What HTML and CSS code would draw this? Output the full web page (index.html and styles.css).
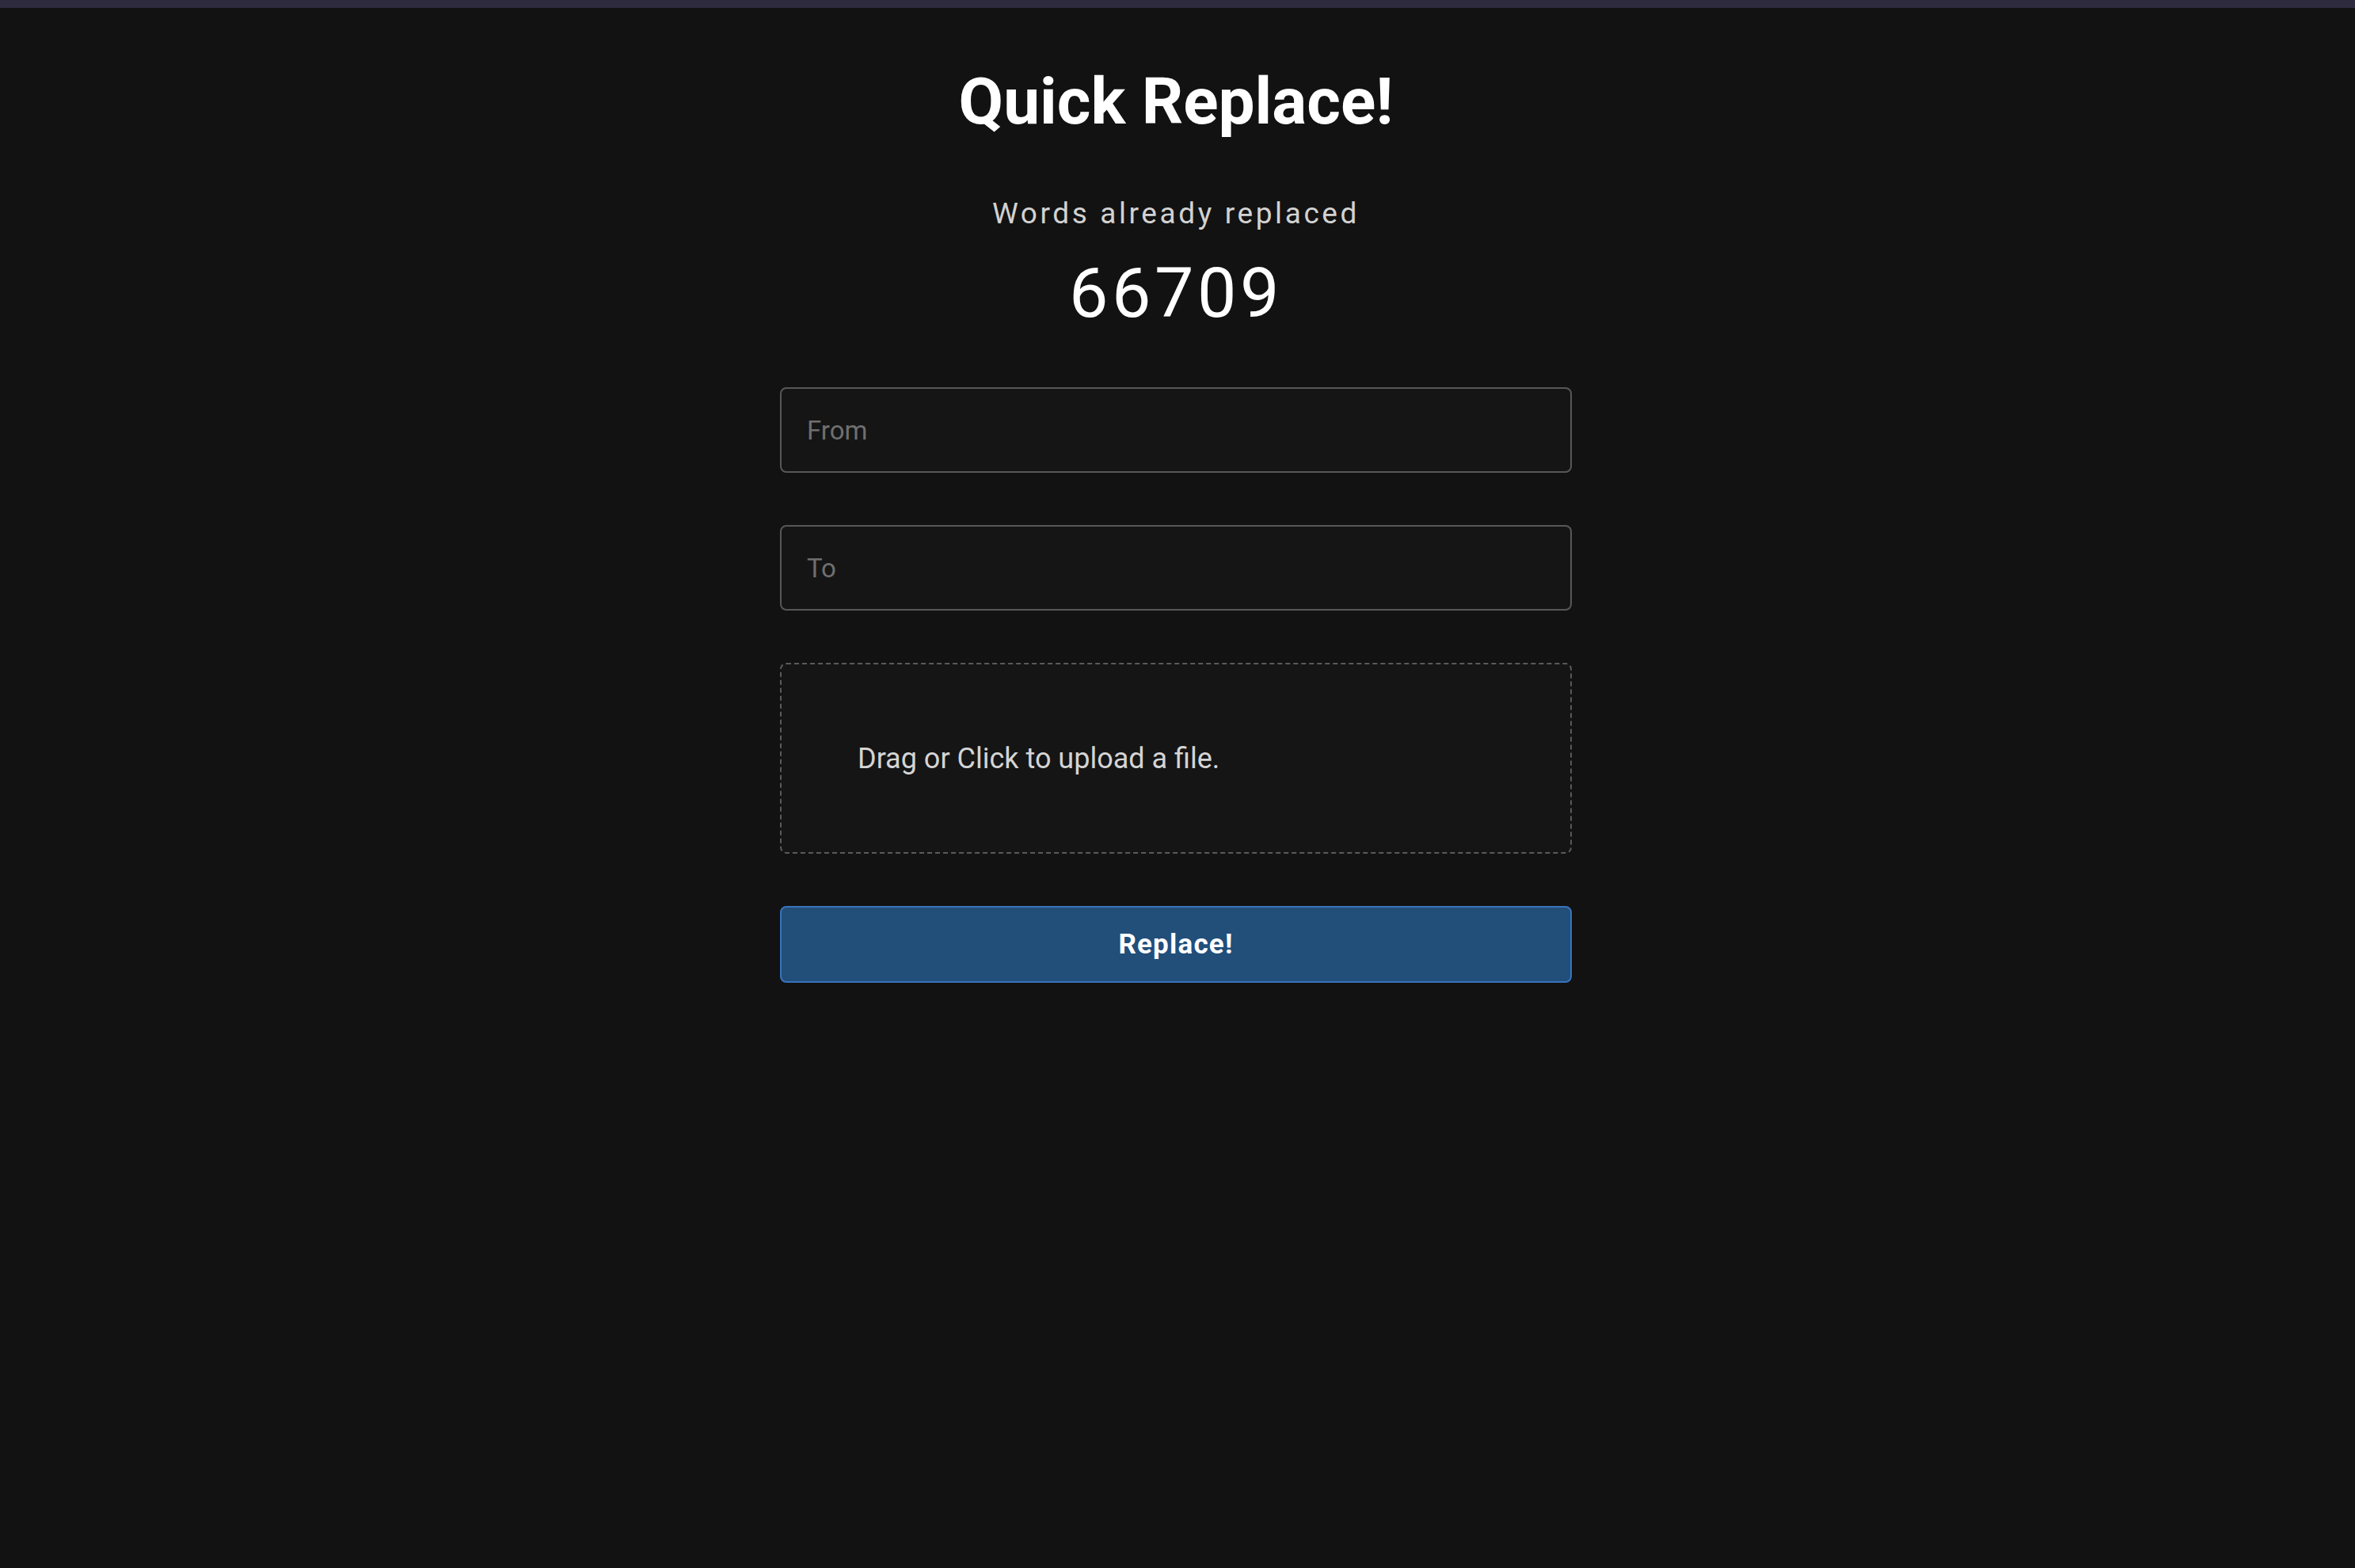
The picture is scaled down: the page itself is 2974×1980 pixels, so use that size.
FILE: index.html
```html
<!DOCTYPE html>
<html lang="en">
<head>
<meta charset="utf-8">
<title>Quick Replace!</title>
<link rel="stylesheet" href="styles.css">
</head>
<body>
<div class="topbar"></div>
<main class="app">
  <h1 class="title">Quick Replace!</h1>
  <p class="counter-label">Words already replaced</p>
  <p class="counter-value">66709</p>
  <form class="form">
    <input class="field" type="text" placeholder="From">
    <input class="field" type="text" placeholder="To">
    <label class="dropzone">
      <span class="dropzone-text">Drag or Click to upload a file.</span>
    </label>
    <button class="submit" type="button">Replace!</button>
  </form>
</main>
</body>
</html>
```
FILE: styles.css
```css
html, body {
  margin: 0;
  padding: 0;
  background: #121212;
  font-family: Roboto, "Noto Sans", sans-serif;
  color: #ffffff;
}

body {
  padding-right: 4px;
}

.topbar {
  height: 10px;
  margin-right: -4px;
  background: #2d2b3d;
}

.app {
  width: 1000px;
  margin: 0 auto;
  display: flex;
  flex-direction: column;
  align-items: center;
}

.title {
  margin: 68px 0 0;
  font-size: 82px;
  line-height: 100px;
  font-weight: 700;
  color: #ffffff;
}

.counter-label {
  margin: 70px 0 0;
  font-size: 37px;
  line-height: 44px;
  letter-spacing: 3.6px;
  color: #d2d2d2;
}

.counter-value {
  margin: 28px 0 0;
  font-size: 88px;
  line-height: 100px;
  font-weight: 400;
  letter-spacing: 4.5px;
  color: #ffffff;
}

.form {
  width: 100%;
  margin-top: 69px;
  display: flex;
  flex-direction: column;
  gap: 66px;
}

.field {
  box-sizing: border-box;
  width: 100%;
  height: 108px;
  padding: 0 32px;
  background: #151515;
  border: 2px solid #575757;
  border-radius: 8px;
  font-family: inherit;
  font-size: 33px;
  color: #e0e0e0;
  outline: none;
}

.field::placeholder {
  color: #6f6f6f;
}

.dropzone {
  box-sizing: border-box;
  height: 241px;
  padding: 0 96px;
  display: flex;
  align-items: center;
  background: #151515;
  border: 2px dashed #5a5a5a;
  border-radius: 8px;
  cursor: pointer;
}

.dropzone-text {
  font-size: 36px;
  color: #d4d4d4;
}

.submit {
  box-sizing: border-box;
  height: 97px;
  background: #224e7a;
  border: 2px solid #3874bb;
  border-radius: 8px;
  font-family: inherit;
  font-size: 35px;
  font-weight: 700;
  letter-spacing: 1.2px;
  color: #ffffff;
  cursor: pointer;
}
```
